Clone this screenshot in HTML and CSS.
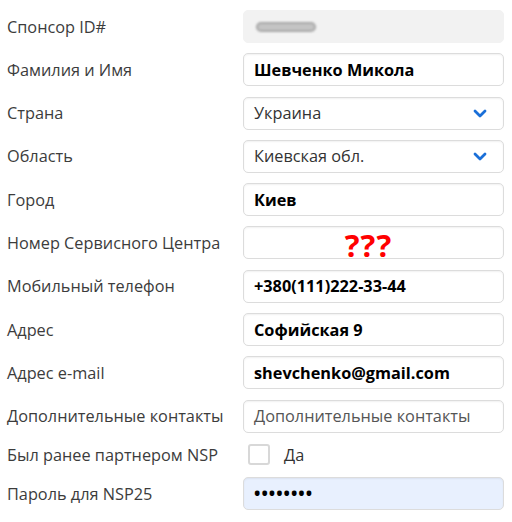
FILE: index.html
```html
<!DOCTYPE html>
<html lang="ru">
  <head>
    <meta charset="UTF-8" />
    <title>Регистрация</title>
    <link rel="stylesheet" href="styles.css">
  </head>
  <body>
    <form class="reg-form">
      <label class="label">Спонсор ID#</label>
      <div class="field field-readonly"><span class="blur"></span></div>

      <label class="label">Фамилия и Имя</label>
      <div class="field value">Шевченко Микола</div>

      <label class="label">Страна</label>
      <div class="field select">
        <span>Украина</span>
        <svg class="chevron" viewBox="0 0 14 9" width="14" height="9"><path d="M2 2l5 5 5-5" fill="none" stroke="#1a6fd8" stroke-width="2.8" stroke-linecap="round" stroke-linejoin="round"/></svg>
      </div>

      <label class="label">Область</label>
      <div class="field select">
        <span>Киевская обл.</span>
        <svg class="chevron" viewBox="0 0 14 9" width="14" height="9"><path d="M2 2l5 5 5-5" fill="none" stroke="#1a6fd8" stroke-width="2.8" stroke-linecap="round" stroke-linejoin="round"/></svg>
      </div>

      <label class="label">Город</label>
      <div class="field value">Киев</div>

      <label class="label">Номер Сервисного Центра</label>
      <div class="field missing">???</div>

      <label class="label">Мобильный телефон</label>
      <div class="field value">+380(111)222-33-44</div>

      <label class="label">Адрес</label>
      <div class="field value">Софийская 9</div>

      <label class="label">Адрес e-mail</label>
      <div class="field value">shevchenko@gmail.com</div>

      <label class="label">Дополнительные контакты</label>
      <div class="field placeholder">Дополнительные контакты</div>

      <label class="label">Был ранее партнером NSP</label>
      <div class="check-row"><span class="checkbox"></span><span>Да</span></div>

      <label class="label">Пароль для NSP25</label>
      <div class="field value password">••••••••</div>
    </form>
  </body>
</html>
```

FILE: styles.css
```css
* {
  margin: 0;
  padding: 0;
  box-sizing: border-box;
}

body {
  background: #fff;
  font-family: "Open Sans", "Noto Sans", sans-serif;
  font-size: 16.3px;
  color: #333;
}

.reg-form {
  display: grid;
  grid-template-columns: 236px 261px;
  row-gap: 10.3px;
  padding: 10px 8px 0 7px;
  align-items: center;
}

.label {
  color: #3c3c3c;
}

.field {
  height: 33px;
  border: 1px solid #dcdcdc;
  border-radius: 5px;
  box-shadow: inset 0 1px 2px rgba(0, 0, 0, 0.06);
  padding: 0 10px;
  display: flex;
  align-items: center;
  color: #333;
}

.field-readonly {
  background: #f2f2f2;
  border-color: #f2f2f2;
  box-shadow: none;
}

.blur {
  display: block;
  width: 60px;
  height: 10px;
  margin-left: 2px;
  background: #c4c4c4;
  border: 2px solid #a8a8a8;
  border-radius: 5px;
  filter: blur(1.2px);
}

.value {
  font-weight: 700;
  color: #000;
}

.select {
  justify-content: space-between;
  padding-right: 16px;
}

.chevron {
  display: block;
}

.missing {
  justify-content: center;
  color: #f00;
  font-weight: 700;
  font-size: 31px;
  letter-spacing: 1px;
  line-height: 1;
  padding: 5px 20px 0 10px;
}

.placeholder {
  color: #555;
}

.check-row {
  display: flex;
  align-items: center;
  gap: 14px;
  height: 24px;
  padding-left: 5px;
}

.checkbox {
  width: 22px;
  height: 21px;
  border: 2px solid #d8d8d8;
  border-radius: 3px;
}

.password {
  background: #e8f0fe;
  font-size: 17px;
  letter-spacing: 1px;
}
```
